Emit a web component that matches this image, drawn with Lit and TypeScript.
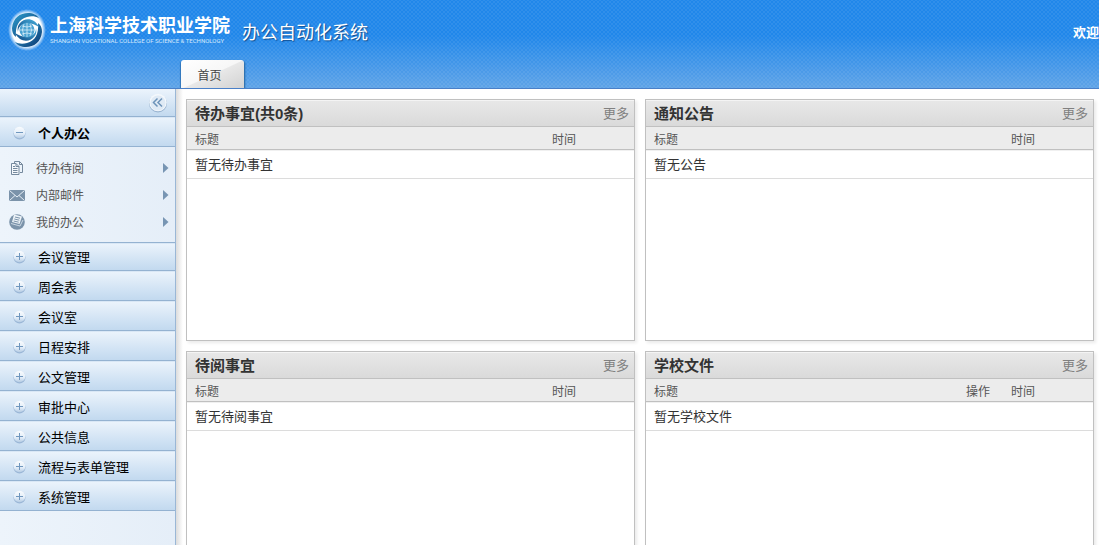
import { LitElement, html, css, svg, nothing } from "lit";
import { customElement, property, state } from "lit/decorators.js";

type Panel = { title: string; empty: string; op?: boolean };

const panels: Panel[] = [
  { title: "待办事宜(共0条)", empty: "暂无待办事宜" },
  { title: "通知公告", empty: "暂无公告" },
  { title: "待阅事宜", empty: "暂无待阅事宜" },
  { title: "学校文件", empty: "暂无学校文件", op: true },
];

const menus = ["会议管理", "周会表", "会议室", "日程安排", "公文管理", "审批中心", "公共信息", "流程与表单管理", "系统管理"];

const docIcon = html`<svg width="16" height="16" viewBox="0 0 16 16" fill="none" stroke="#75899d" stroke-width="1">
  <path d="M5.500 3V1.500h5l3 3v8H11" /><path d="M10.500 1.500v3h3" />
  <path fill="#f4f8fc" d="M2.500 3.500h4.500l3 3v8h-7.500z" /><path d="M7 3.500v3h3M4 6.500h2M4 8.500h4.500M4 10.500h4.500M4 12.500h4.500" />
</svg>`;

const mailIcon = html`<svg width="16" height="16" viewBox="0 0 16 16">
  <rect x="0" y="3" width="16" height="11" fill="#7b93aa" />
  <path d="M.5 3.500L8 10l7.500-6.500M.5 13.500L6 8.500M15.500 13.500L10 8.500" fill="none" stroke="#e6eef6" stroke-width="1" />
</svg>`;

const workIcon = html`<svg width="16" height="16" viewBox="0 0 16 16">
  <circle cx="8" cy="8" r="7.800" fill="#7b93aa" />
  <path d="M5 .5l8 2-2.500 7.500-7.500-2z" fill="#edf3f8" />
  <path d="M6 3l5 1.200M5.300 5l5 1.200M4.700 7l5 1.200" stroke="#7b93aa" stroke-width="1" />
  <path d="M2 9.500l9 2.500 3-6" fill="none" stroke="#c9d6e2" stroke-width="1" />
</svg>`;

const subItems = [
  { label: "待办待阅", icon: docIcon },
  { label: "内部邮件", icon: mailIcon },
  { label: "我的办公", icon: workIcon },
];

@customElement("toggle-ball")
class ToggleBall extends LitElement {
  @property({ type: Boolean }) open = false;
  static styles = css`
    :host { display: block; flex: none; width: 14px; height: 14px; }
    svg { display: block; }
  `;
  render() {
    return html`<svg width="14" height="14" viewBox="0 0 14 14" aria-hidden="true">
      <defs>
        <linearGradient id="g" x2="0" y2="1">
          <stop offset="0" stop-color="#fafcfe" /><stop offset=".6" stop-color="#e2edf8" /><stop offset="1" stop-color="#b4cbe3" />
        </linearGradient>
      </defs>
      <circle cx="7.500" cy="7.500" r="6" fill="#8eadcf" opacity=".8" />
      <circle cx="7.500" cy="6.500" r="5.800" fill="url(#g)" />
      <path d="M4 6.500h7" stroke="#7097be" />
      ${this.open ? nothing : svg`<path d="M7.500 3v7" stroke="#7097be" />`}
    </svg>`;
  }
}

@customElement("info-panel")
class InfoPanel extends LitElement {
  @property({ attribute: false }) panel!: Panel;
  static styles = css`
    :host {
      display: block; box-sizing: border-box; min-height: 242px; background: #fff;
      border: 1px solid #c0c0c0; box-shadow: 2px 2px 3px #ebebeb;
    }
    .head {
      box-sizing: border-box; display: flex; align-items: center; justify-content: space-between; height: 27px; padding: 2px 5px 0 8px;
      background: linear-gradient(#e8e8e8, #dadada); border-bottom: 1px solid #c0c0c0; box-shadow: inset 0 1px #f4f4f4;
    }
    h2 { margin: 0; font-size: 15px; line-height: 20px; font-weight: bold; color: #333; }
    a { font-size: 13px; line-height: 20px; color: #808080; text-decoration: none; }
    table { width: 100%; border-collapse: separate; border-spacing: 0; table-layout: fixed; }
    th, td { box-sizing: border-box; text-align: left; padding: 2px 0 0; }
    th {
      height: 23px; font-size: 12px; font-weight: normal; line-height: 16px; color: #555;
      background: #ececec; border-bottom: 1px solid #c0c0c0; padding-top: 3px;
    }
    th:first-child { padding-left: 8px; }
    td { height: 29px; padding-left: 8px; font-size: 13px; line-height: 18px; color: #333; border-bottom: 1px solid #dcdcdc; box-shadow: inset 0 1px #f0f0f0; }
    .op { width: 45px; }
    .time { width: 82px; }
  `;
  render() {
    const { title, empty, op } = this.panel;
    return html`
      <div class="head"><h2>${title}</h2><a href="#">更多</a></div>
      <table>
        <thead><tr><th>标题</th>${op ? html`<th class="op">操作</th>` : nothing}<th class="time">时间</th></tr></thead>
        <tbody><tr><td colspan=${op ? 3 : 2}>${empty}</td></tr></tbody>
      </table>`;
  }
}

@customElement("app-root")
class AppRoot extends LitElement {
  @state() private expanded = true;

  static styles = css`
    :host {
      display: flex; flex-direction: column; height: 100vh; overflow: hidden; background: #fff;
      font-family: "Liberation Sans", "Noto Sans CJK SC", sans-serif; font-size: 13px; color: #333;
    }
    button { font-family: inherit; border: 0; margin: 0; padding: 0; cursor: pointer; }
    header {
      flex: none; box-sizing: border-box; height: 89px; display: flex; flex-direction: column; justify-content: space-between;
      border-bottom: 1px solid #4a80c8; overflow: hidden;
      background:
        radial-gradient(circle, rgba(255, 255, 255, .07) 0 1px, transparent 1px) 0 0 / 4px 4px,
        radial-gradient(circle, rgba(255, 255, 255, .07) 0 1px, transparent 1px) 2px 2px / 4px 4px,
        linear-gradient(#2087ea 0, #2087ea 40%, #5ea3e7 100%);
    }
    .brand { display: flex; align-items: center; height: 60px; padding-left: 8px; color: #fff; white-space: nowrap; }
    .logo { flex: none; display: block; }
    .school { margin-left: 4px; width: 184px; }
    .cn { display: block; font-size: 18px; line-height: 22px; font-weight: bold; }
    .en { display: block; font-family: Roboto, sans-serif; font-size: 6px; line-height: 8px; color: #d5e9fc; }
    h1 { margin: 6px 0 0 8px; font-size: 18px; line-height: 24px; font-weight: normal; text-shadow: 1px 1px 1px #134f90; }
    .welcome { margin: 6px 0 0 auto; line-height: 18px; font-weight: bold; }
    .tabs { display: flex; padding-left: 181px; }
    .tab {
      width: 63px; height: 28px; padding-right: 6px; border-radius: 3px 3px 0 0; font-size: 12px; color: #444;
      background: linear-gradient(155deg, #fff 0, #f7f7f7 50%, #e8e8e8 52%, #d2d2d2 100%); box-shadow: 1px 1px 2px #22639f, -1px 1px 1px #3478bd;
    }
    .body { flex: 1; min-height: 0; display: flex; }
    nav { flex: none; box-sizing: border-box; width: 176px; border-right: 1px solid #9ab7d6; background: linear-gradient(90deg, #edf4fb, #e5eef8); }
    .fold, .bar { box-sizing: border-box; background: linear-gradient(#ecf4fc, #c2d9ef); border-bottom: 1px solid #94b2d1; }
    .fold { display: flex; justify-content: flex-end; height: 28px; padding: 4px 7px 0 0; }
    .fold button { background: none; width: 20px; height: 20px; }
    .bar {
      display: flex; align-items: flex-end; width: 100%; height: 30px; padding: 0 0 3px 12px; gap: 12px;
      box-shadow: inset 0 1px #d9e7f5; font-size: 13px; line-height: 18px; color: #000;
    }
    .bar toggle-ball { margin-bottom: 3px; }
    .bar.current { font-weight: bold; }
    .bar.current + ul + .bar { height: 28px; }
    ul { list-style: none; margin: 0; padding: 7px 0; border-bottom: 1px solid #94b2d1; }
    li a { display: flex; align-items: center; height: 27px; padding: 0 6px 0 9px; font-size: 12px; color: #555; text-decoration: none; }
    li a span { flex: 1; margin-left: 11px; }
    li svg { display: block; }
    main {
      flex: 1; min-width: 0; display: grid; grid-template-columns: 1fr 1fr; align-content: start; gap: 10px; padding: 10px 5px 10px 10px;
      background: linear-gradient(90deg, #dcdcdc, #fff 7px);
    }
  `;

  private logo() {
    return html`<svg class="logo" width="38" height="44" viewBox="0 0 38 44" role="img" aria-label="校徽">
      <defs>
        <radialGradient id="halo"><stop offset=".78" stop-color="#fff" /><stop offset="1" stop-color="#fff" stop-opacity="0" /></radialGradient>
        <linearGradient id="dark" x2="1" y2="1"><stop offset="0" stop-color="#2f9fd0" /><stop offset="1" stop-color="#0a3670" /></linearGradient>
        <linearGradient id="light" x1="0" y1="1" x2="1" y2="0"><stop offset="0" stop-color="#0e4580" /><stop offset="1" stop-color="#4ab4e0" /></linearGradient>
      </defs>
      <ellipse cx="19" cy="22" rx="19" ry="21" fill="url(#halo)" />
      <path d="M4 20C5 10 12 5 20 5c5 0 9 2 11 5-4-2-8-2-12-1C11 11 7 18 8 29 5 27 4 24 4 20z" fill="url(#dark)" />
      <path d="M34 24c-1 10-8 15-16 15-5 0-9-2-11-5 4 2 8 2 12 1 8-2 12-9 11-20 3 2 4 5 4 9z" fill="url(#dark)" />
      <path d="M12 15c4-5 14-6 19 4-5-3-10-5-15-3-4 1-6 4-6 8-1-4 0-7 2-9z" fill="url(#light)" />
      <path d="M26 29c-4 5-14 6-19-4 5 3 10 5 15 3 4-1 6-4 6-8 1 4 0 7-2 9z" fill="url(#light)" />
      <circle cx="19" cy="22" r="7.500" fill="#4ba3d2" />
      <path d="M12 22h14M14 18q5 2 10 0M14 26q5-2 10 0M19 15v14M16 16q-3 6 0 12M22 16q3 6 0 12" fill="none" stroke="#e8f6fd" stroke-width=".7" />
    </svg>`;
  }

  render() {
    return html`
      <header>
        <div class="brand">
          ${this.logo()}
          <div class="school"><span class="cn">上海科学技术职业学院</span><span class="en">SHANGHAI VOCATIONAL COLLEGE OF SCIENCE &amp; TECHNOLOGY</span></div>
          <h1>办公自动化系统</h1>
          <div class="welcome">欢迎</div>
        </div>
        <div class="tabs"><button class="tab">首页</button></div>
      </header>
      <div class="body">
        <nav>
          <div class="fold">
            <button aria-label="收起菜单">
              <svg width="20" height="20" viewBox="0 0 20 20">
                <circle cx="10" cy="10.500" r="9" fill="#9ab5d2" /><circle cx="10" cy="9.500" r="8.700" fill="#f4f8fc" /><circle cx="10" cy="10" r="7.500" fill="#dfeaf5" />
                <path d="M9.500 5.500l-4 4 4 4M14 5.500l-4 4 4 4" fill="none" stroke="#6d94ba" stroke-width="1.500" />
              </svg>
            </button>
          </div>
          <button class="bar current" aria-expanded=${this.expanded} @click=${() => (this.expanded = !this.expanded)}>
            <toggle-ball ?open=${this.expanded}></toggle-ball>个人办公
          </button>
          <ul ?hidden=${!this.expanded}>
            ${subItems.map((i) => html`<li><a href="#">${i.icon}<span>${i.label}</span><svg width="6" height="10" viewBox="0 0 6 10"><path d="M0 0l5.500 5L0 10z" fill="#7795b3" /></svg></a></li>`)}
          </ul>
          ${menus.map((m) => html`<button class="bar"><toggle-ball></toggle-ball>${m}</button>`)}
        </nav>
        <main>${panels.map((p) => html`<info-panel .panel=${p}></info-panel>`)}</main>
      </div>`;
  }
}
